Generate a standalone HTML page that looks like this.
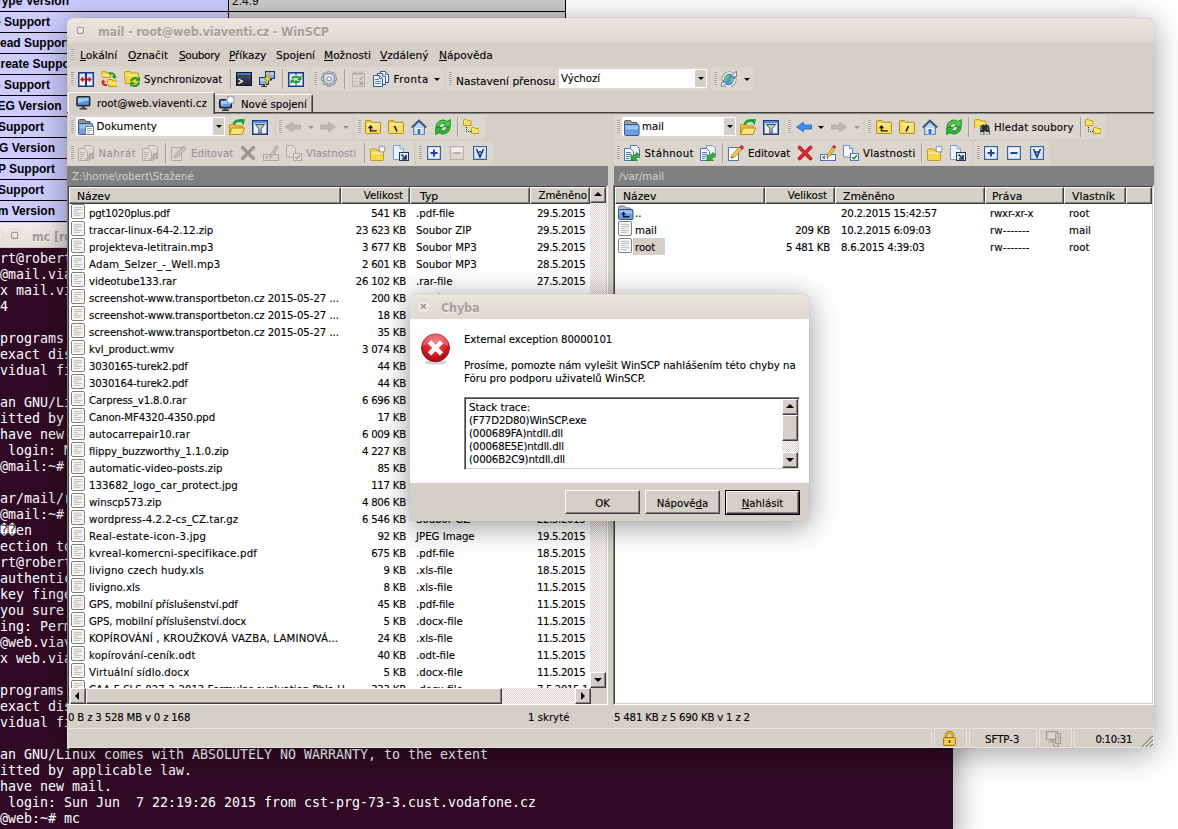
<!DOCTYPE html>
<html lang="cs"><head><meta charset="utf-8"><title>WinSCP</title>
<style>
html,body{margin:0;padding:0}
body{width:1178px;height:829px;overflow:hidden;position:relative;background:#fff;font-family:"DejaVu Sans Condensed","DejaVu Sans",sans-serif;font-stretch:condensed;font-size:11px;color:#000}
*{box-sizing:border-box}
.abs{position:absolute}
/* phpinfo table */
#php{position:absolute;left:0;top:0;width:566px;height:226px;background:#ccc;overflow:hidden;border-right:1px solid #000}
#php .row{position:absolute;left:0;width:566px;height:21px;border-bottom:1px solid #000}
#php .k{position:absolute;left:0;top:0;width:229px;height:20px;background:#ccf;border-right:1px solid #000;overflow:hidden}
#php .k span{position:absolute;top:3px;white-space:nowrap;font:bold 12px "Liberation Sans",sans-serif;font-stretch:normal;line-height:14px}
#php .v{position:absolute;left:232px;top:3px;font:12px "Liberation Sans",sans-serif;font-stretch:normal;line-height:14px}
/* terminal */
#term{position:absolute;left:0;top:223px;width:953px;height:620px;background:#300a24;box-shadow:0 4px 30px rgba(0,0,0,.45);clip-path:inset(0 -50px 0 0)}
#term .tb{position:absolute;left:0;top:0;width:953px;height:25px;background:linear-gradient(#f1eee9,#e3dfd8);border-bottom:1px solid #cfcac2}
#term .tb .ttl{position:absolute;left:32px;top:5.500px;font:bold 12.5px/15px "DejaVu Sans Condensed","DejaVu Sans",sans-serif;font-stretch:condensed;color:#a5a19a;white-space:nowrap;letter-spacing:-.14px;text-shadow:0 1px 0 rgba(255,255,255,.5)}
#term pre{position:absolute;left:0;top:27px;margin:0;font:14px/16px "DejaVu Sans Mono","Liberation Mono",monospace;font-stretch:normal;color:#fff;transform:scaleX(0.9493);transform-origin:0 0;white-space:pre}
/* main window */
#win{position:absolute;left:67px;top:18px;width:1087px;height:730px;background:#d4d0c8;border-radius:6px 6px 0 0;box-shadow:0 5px 32px rgba(0,0,0,.38),0 0 1px rgba(0,0,0,.25)}
#win .title{position:absolute;left:0;top:0;width:100%;height:25px;border-radius:6px 6px 0 0;background:linear-gradient(#eae6df,#dfd8d0);border-top:1px solid #e6dfd6}
.wt{position:absolute;white-space:nowrap;font:bold 12.5px/15px "DejaVu Sans Condensed","DejaVu Sans",sans-serif;font-stretch:condensed;color:#a5a19a;letter-spacing:-.18px;text-shadow:0 1px 0 rgba(255,255,255,.5)}
.t{position:absolute;white-space:nowrap;font:10.2px/12px "DejaVu Sans",sans-serif;font-stretch:normal;color:#000}
.g{color:#96939a}
u{text-decoration:underline;text-underline-offset:1px}
.grp{position:absolute;background:#dbd7cf;border-radius:3px}
.grip{position:absolute;width:3px;background:repeating-linear-gradient(#a6a299 0 1px,#e6e3dd 1px 2px)}
.vsep{position:absolute;width:2px;border-left:1px solid #a19e97;border-right:1px solid #e4e1db}
.combo{position:absolute;background:#fff}
.cbtn{position:absolute;background:#d4d0c8}
.cbtn:after{content:"";position:absolute;left:3px;top:7px;border:3px solid transparent;border-top:3px solid #000;border-bottom:0}
.dd:after{content:"";position:absolute;left:0;top:0;border:3px solid transparent;border-top:3px solid #000;border-bottom:0}
.dd{position:absolute;width:6px;height:3px}
.dd.g:after{border-top-color:#9a968f}
.ico{position:absolute;width:16px;height:16px}
.pathbar{position:absolute;height:19px;background:#808080}
.pathbar span{position:absolute;left:5px;top:5px;color:#d4d0c8;white-space:nowrap;font:10.2px/12px "DejaVu Sans",sans-serif;font-stretch:normal}
.hdr{position:absolute;height:18px;background:#d4d0c8}
.hc{position:absolute;top:0;height:17px;border:1px solid #fff;border-right-color:#404040;border-bottom-color:#404040;box-shadow:inset -1px -1px 0 #808080;background:#d4d0c8;font:10.8px/14px "DejaVu Sans",sans-serif;font-stretch:normal;padding:2px 5px 0 6px;white-space:nowrap;overflow:hidden}
.hc.r{text-align:right}
.panel{position:absolute;background:#fff;overflow:hidden}
.r{position:absolute;left:0;height:17px;width:100%;font:10.2px/12px "DejaVu Sans",sans-serif;font-stretch:normal;white-space:nowrap}
.r .fi{position:absolute;left:1px;top:0}
.r span{position:absolute;top:4px}
.r .n{left:19px;letter-spacing:-.04px}
.r .s{right:0;text-align:right}
.sb{position:absolute;background-color:#eae8e3;background-image:conic-gradient(#fff 25%,#d4d0c8 0 50%,#fff 0 75%,#d4d0c8 0);background-size:2px 2px}
.btn3{position:absolute;background:#d4d0c8;border:1px solid #fff;border-right-color:#404040;border-bottom-color:#404040;box-shadow:inset -1px -1px 0 #808080,inset 1px 1px 0 #d4d0c8}
.arr{position:absolute;width:0;height:0;border:4px solid transparent}
.sunk{position:absolute;border:1px solid #808080;border-right-color:#fff;border-bottom-color:#fff}
#lp .r .s{left:271px;width:65px}
#lp .r .t2{left:346px}
#lp .r .d{left:467px;letter-spacing:-.4px}
.r .s{letter-spacing:-.25px}
.r .dt{letter-spacing:-.27px}
/* dialog */
#dlg{position:absolute;left:410px;top:294px;width:399px;height:227px;background:#d4d0c8;border-radius:6px 6px 0 0;box-shadow:0 5px 30px rgba(0,0,0,.42),0 0 1px rgba(0,0,0,.3)}
#dlg .title{position:absolute;left:0;top:0;width:100%;height:25px;border-radius:6px 6px 0 0;background:linear-gradient(#eae6df,#dfd8d0);border-top:1px solid #e6dfd6}
#dlg .body{position:absolute;left:0;top:25px;width:100%;height:164px;background:#fff}
.pb{position:absolute;background:#d4d0c8;border:1px solid #fff;border-right-color:#404040;border-bottom-color:#404040;box-shadow:inset -1px -1px 0 #808080;text-align:center;font:10.2px/12px "DejaVu Sans",sans-serif;font-stretch:normal;padding-top:7px}
.sc{position:absolute;border:1px solid #e7e4de}
.t,.r,.hc,.pb{-webkit-text-stroke:.12px}
#rp .fi{left:3px}
#rp .r .n{left:20px}

</style></head><body>
<div id="php">
<div class="row" style="top:-9px"><div class="k"><span style="right:159px">FreeType Version</span></div><div class="v">2.4.9</div></div>
<div class="row" style="top:12px"><div class="k"><span style="right:178px">FreeType Support</span></div></div>
<div class="row" style="top:33px"><div class="k"><span style="right:158px">GIF Read Support</span></div></div>
<div class="row" style="top:54px"><div class="k"><span style="right:149.5px">GIF Create Support</span></div></div>
<div class="row" style="top:75px"><div class="k"><span style="right:178px">JPEG Support</span></div></div>
<div class="row" style="top:96px"><div class="k"><span style="right:166.4px">libJPEG Version</span></div></div>
<div class="row" style="top:117px"><div class="k"><span style="right:184px">PNG Support</span></div></div>
<div class="row" style="top:138px"><div class="k"><span style="right:173px">libPNG Version</span></div></div>
<div class="row" style="top:159px"><div class="k"><span style="right:173px">WBMP Support</span></div></div>
<div class="row" style="top:180px"><div class="k"><span style="right:184px">XPM Support</span></div></div>
<div class="row" style="top:201px"><div class="k"><span style="right:173px">libXpm Version</span></div></div>
<div class="row" style="top:222px"><div class="k"></div></div>
</div>

<div id="term">
<div class="tb"><svg class="abs" style="left:-12px;top:4px" width="36" height="17" viewBox="0 0 36 17"><circle cx="8.400" cy="8.400" r="6.800" fill="#ece8e2" stroke="#dcd7cf"/><path d="M5.500 8.400h5.800" stroke="#a09c95" stroke-width="1.300"/><circle cx="26.600" cy="8.400" r="6.800" fill="#ece8e2" stroke="#dcd7cf"/><rect x="23.500" y="5.300" width="6.200" height="6.200" rx="1.200" fill="none" stroke="#a09c95" stroke-width="1.300"/></svg><span class="ttl">mc [root@web.viaventi.cz]:~</span></div>
<pre>rt@robert-desktop:~$ ssh root@mail.viaventi.cz
@mail.viaventi.cz's password:
x mail.viaventi.cz 3.2.0-4-amd64 #1 SMP Debian 3.2.65-1+deb7u2 x86_64
4

programs included with the Debian GNU/Linux system are free software;
exact distribution terms for each program are described in the
vidual files in /usr/share/doc/*/copyright.

an GNU/Linux comes with ABSOLUTELY NO WARRANTY, to the extent
itted by applicable law.
have new mail.
 login: Mon Jun  8 04:12:51 2015 from cst-prg-73-3.cust.vodafone.cz
@mail:~# ls -la /var/mail

ar/mail/root
@mail:~# exit
��en
ection to mail.viaventi.cz closed.
rt@robert-desktop:~$ ssh root@web.viaventi.cz
authenticity of host 'web.viaventi.cz' can't be established.
key fingerprint is 5c:1f:2a:9b:77:e0:43:d8:11:6a:f2:0c:8e:b5:39:74.
you sure you want to continue connecting (yes/no)? yes
ing: Permanently added 'web.viaventi.cz' to the list of known hosts.
@web.viaventi.cz's password:
x web.viaventi.cz 3.2.0-4-amd64 #1 SMP Debian 3.2.65-1+deb7u2 x86_64

programs included with the Debian GNU/Linux system are free software;
exact distribution terms for each program are described in the
vidual files in /usr/share/doc/*/copyright.

an GNU/Linux comes with ABSOLUTELY NO WARRANTY, to the extent
itted by applicable law.
have new mail.
 login: Sun Jun  7 22:19:26 2015 from cst-prg-73-3.cust.vodafone.cz
@web:~# mc</pre>
</div>

<div id="win"><div class="title"></div></div>
<div id="w">
<!-- title -->
<svg class="abs" style="left:72px;top:22px" width="17" height="17" viewBox="0 0 17 17"><circle cx="8.400" cy="8.400" r="6.800" fill="#ece8e2" stroke="#dcd7cf"/><rect x="5.300" y="5.300" width="6.200" height="6.200" rx="1.200" fill="none" stroke="#a09c95" stroke-width="1.300"/></svg>
<span class="wt" style="left:98px;top:23.500px">mail - root@web.viaventi.cz - WinSCP</span>
<!-- menu -->
<div class="grip" style="left:71px;top:49px;height:11px"></div>
<span class="t" style="left:80px;top:49px;font-size:10.6px"><u>L</u>okální</span>
<span class="t" style="left:128px;top:49px;font-size:10.6px"><u>O</u>značit</span>
<span class="t" style="left:179px;top:49px;font-size:10.6px;letter-spacing:-.4px"><u>S</u>oubory</span>
<span class="t" style="left:229px;top:49px;font-size:10.6px;letter-spacing:-.1px"><u>P</u>říkazy</span>
<span class="t" style="left:276px;top:49px;font-size:10.6px">Spojení</span>
<span class="t" style="left:324px;top:49px;font-size:10.6px"><u>M</u>ožnosti</span>
<span class="t" style="left:380px;top:49px;font-size:10.6px"><u>V</u>zdálený</span>
<span class="t" style="left:439px;top:49px;font-size:10.6px"><u>N</u>ápověda</span>
<!-- toolbar 1 -->
<div class="grp" style="left:68px;top:67px;width:241px;height:24px"></div>
<div class="grip" style="left:71px;top:72px;height:13px"></div>
<svg class="ico" style="left:78px;top:71px" width="16" height="16" viewBox="0 0 16 16"><rect x="1" y="2" width="14" height="13" fill="#fff"/><rect x="1" y="2" width="14" height="5" fill="#d6e6fa"/><rect x="0.750" y="1.750" width="14.500" height="13.500" fill="none" stroke="#1b3a86" stroke-width="1.500"/><rect x="7" y="1" width="2" height="15" fill="#1b3a86"/><path d="M2 8.500l3.200-3v2h5.600v-2l3.200 3-3.200 3v-2H5.200v2z" fill="#c4141c"/></svg>
<svg class="ico" style="left:101px;top:71px" width="16" height="16" viewBox="0 0 16 16"><path d="M0.5 1.5q0-1 1-1h3.2l1 1.500h2.8q1 0 1 1v3.5h-8z" fill="#f7d64a" stroke="#c39a12"/><rect x="1" y="3.5" width="7" height="1.200" fill="#fdf1b0"/><path d="M6.5 9.5q0-1 1-1h3.6l1 1.500h3.4q1 0 1 1v4.5h-9z" fill="#f7d64a" stroke="#c39a12"/><rect x="7" y="11.5" width="8" height="1.200" fill="#fdf1b0"/><path d="M8 2.500c3.500-1 5.500.5 5.500 3" fill="none" stroke="#1e9e28" stroke-width="2"/><path d="M10.800 5h5.200l-2.600 3.200z" fill="#1e9e28"/><path d="M6 14c-3 .5-4.500-1-4.500-3" fill="none" stroke="#cf1f24" stroke-width="2"/><path d="M0 11.500h4.800L2 8.500z" fill="#cf1f24"/></svg>
<svg class="ico" style="left:124px;top:71px" width="16" height="16" viewBox="0 0 16 16"><path d="M0.5 1.5q0-1 1-1h5.0l1 1.500h6.0q1 0 1 1v9.5h-13z" fill="#f7d64a" stroke="#c39a12"/><rect x="1" y="3.5" width="12" height="1.200" fill="#fdf1b0"/><path d="M7.200 10.500a4 3.600 0 0 1 7-2" fill="none" stroke="#1e9e28" stroke-width="2.200"/><path d="M16 5.500v4.800h-4.800z" fill="#1e9e28"/><path d="M15 11.500a4 3.600 0 0 1-7 2.200" fill="none" stroke="#1e9e28" stroke-width="2.200"/><path d="M6.200 16v-4.800H11z" fill="#1e9e28"/></svg>
<span class="t" style="left:144px;top:74px">Synchronizovat</span>
<div class="vsep" style="left:230px;top:69px;height:20px"></div>
<svg class="ico" style="left:236px;top:72px" width="16" height="16" viewBox="0 0 16 16"><rect x="0.500" y="0.500" width="15" height="13" fill="#28313d" stroke="#10151c"/><rect x="1" y="1" width="14" height="2.200" fill="#3f7ad6"/><rect x="1" y="3.200" width="14" height="4" fill="#3a4453"/><path d="M2.500 7l4 2.300-4 2.300" stroke="#fff" fill="none" stroke-width="1.300"/></svg>
<svg class="ico" style="left:259px;top:71px" width="16" height="16" viewBox="0 0 16 16"><rect x="6.500" y="0.500" width="9" height="7" fill="#7db1ee" stroke="#27364f"/><rect x="7.500" y="1.500" width="7" height="2.500" fill="#b7d6f8"/><rect x="10" y="8" width="3" height="1.500" fill="#27364f"/><rect x="0.500" y="6.500" width="9" height="7" fill="#7db1ee" stroke="#27364f"/><rect x="1.500" y="7.500" width="7" height="2.500" fill="#b7d6f8"/><rect x="4" y="14" width="2" height="1" fill="#27364f"/><rect x="2" y="15" width="6" height="1" fill="#27364f"/><path d="M11 1.500L5 8.800h2.800L5.500 14l6.500-7.200H9.200z" fill="#ffd93a" stroke="#b98a10" stroke-width=".7"/></svg>
<div class="vsep" style="left:282px;top:69px;height:20px"></div>
<svg class="ico" style="left:288px;top:72px" width="16" height="16" viewBox="0 0 16 16"><rect x="1" y="1" width="14" height="13" fill="#fff"/><rect x="1" y="1" width="14" height="5" fill="#d6e6fa"/><rect x="0.750" y="0.750" width="14.500" height="13.500" fill="none" stroke="#1b3a86" stroke-width="1.500"/><path d="M8 1v14" stroke="#1b3a86" stroke-width="1.200" stroke-dasharray="2 1.500"/><path d="M4 6.500a4.500 3 0 0 1 7-1" fill="none" stroke="#1e9e28" stroke-width="2"/><path d="M13.500 3v5H8.800z" fill="#1e9e28"/><path d="M12 8.500a4.500 3 0 0 1-7 1.200" fill="none" stroke="#1e9e28" stroke-width="2"/><path d="M2.500 12.500v-5h4.700z" fill="#1e9e28"/></svg>
<div class="grp" style="left:311px;top:67px;width:133px;height:24px"></div>
<div class="grip" style="left:314px;top:72px;height:13px"></div>
<svg class="ico" style="left:321px;top:71px" width="16" height="16" viewBox="0 0 16 16"><g transform="translate(8 7.800)" fill="#c3cad6" stroke="#76829a" stroke-width=".9"><rect x="-1.800" y="-7.600" width="3.600" height="4.500" rx=".6" transform="rotate(0)"/><rect x="-1.800" y="-7.600" width="3.600" height="4.500" rx=".6" transform="rotate(45)"/><rect x="-1.800" y="-7.600" width="3.600" height="4.500" rx=".6" transform="rotate(90)"/><rect x="-1.800" y="-7.600" width="3.600" height="4.500" rx=".6" transform="rotate(135)"/><rect x="-1.800" y="-7.600" width="3.600" height="4.500" rx=".6" transform="rotate(180)"/><rect x="-1.800" y="-7.600" width="3.600" height="4.500" rx=".6" transform="rotate(225)"/><rect x="-1.800" y="-7.600" width="3.600" height="4.500" rx=".6" transform="rotate(270)"/><rect x="-1.800" y="-7.600" width="3.600" height="4.500" rx=".6" transform="rotate(315)"/><circle r="5.400"/></g><circle cx="8" cy="7.800" r="4.900" fill="#cdd3dd"/><path d="M3.400 6.500a4.900 4.900 0 0 1 9.200 0z" fill="#e3e7ee"/><circle cx="8" cy="7.800" r="2.100" fill="#fbfbfb" stroke="#76829a" stroke-width=".9"/></svg>
<div class="vsep" style="left:344px;top:69px;height:20px"></div>
<svg class="ico" style="left:352px;top:71px" width="16" height="16" viewBox="0 0 16 16"><rect x="0.500" y="2.500" width="12" height="13" fill="#dad7d0" stroke="#b3b0a8"/><path d="M2 .5v3.500M4 .5v3.500M6 .5v3.500M8 .5v3.500M10 .5v3.500" stroke="#a9a69f"/><path d="M2 7.500h4M2 10.500h4M2 13.500h4" stroke="#c3c0b9"/><path d="M7.500 7l1.200 1.200L11 5.800M7.500 10.500l3.500 3.500M11 10.500L7.500 14" stroke="#a3a099" fill="none" stroke-width="1.300"/></svg>
<svg class="ico" style="left:373px;top:71px" width="16" height="16" viewBox="0 0 16 16"><path d="M7.5 0.5h5l3 3v8h-8z" fill="#f4f8fe" stroke="#33579b"/><path d="M12.5 0.5v3h3" fill="#c9dcf5" stroke="#33579b" stroke-width=".8"/><path d="M4.5 2.5h5l3 3v8h-8z" fill="#f4f8fe" stroke="#33579b"/><path d="M9.5 2.5v3h3" fill="#c9dcf5" stroke="#33579b" stroke-width=".8"/><path d="M0.500 4.500h6l3 3v8h-9z" fill="#f4f8fe" stroke="#33579b"/><path d="M6.500 4.500v3h3" fill="#c9dcf5" stroke="#33579b" stroke-width=".8"/><path d="M2 8.500h4M2 10.500h6M2 12.500h6" stroke="#4d7fca" stroke-width="1"/></svg>
<span class="t" style="left:393.5px;top:74px;letter-spacing:0.55px">Fronta</span>
<div class="dd" style="left:434px;top:78px"></div>
<div class="grp" style="left:446px;top:67px;width:262px;height:24px"></div>
<div class="grip" style="left:449px;top:72px;height:13px"></div>
<span class="t" style="left:456px;top:75px;font-size:10.6px">Nastavení přenosu</span>
<div class="combo" style="left:559px;top:69px;width:148px;height:19px"></div>
<span class="t" style="left:561px;top:73px">Výchozí</span>
<div class="cbtn" style="left:695px;top:70px;width:11px;height:17px"></div>
<div class="grp" style="left:711px;top:67px;width:43px;height:24px"></div>
<div class="grip" style="left:714px;top:72px;height:13px"></div>
<svg class="ico" style="left:721px;top:71px" width="16" height="16" viewBox="0 0 16 16"><circle cx="8" cy="8.500" r="6" fill="#4b93e4" stroke="#2a5ca8"/><path d="M3 6c1.500-2.500 4-2.500 5-1.500s-1 2-2 3 .5 2.500-1 3.500S2.500 8.500 3 6zM10 7c1-.8 3-.5 3.500.5s-.5 3.500-2 4-2.500-3-1.500-4.500z" fill="#6fcf57"/><path d="M2.200 9a6.200 6.200 0 0 1 9.500-6" fill="none" stroke="#5a6b86" stroke-width="3"/><path d="M2.200 9a6.200 6.200 0 0 1 9.500-6" fill="none" stroke="#e9edf4" stroke-width="1.800"/><path d="M9.800 5.800h5.700V0z" fill="#e9edf4" stroke="#5a6b86" stroke-width=".8"/><path d="M13.800 8a6.200 6.200 0 0 1-9.500 6" fill="none" stroke="#5a6b86" stroke-width="3"/><path d="M13.800 8a6.200 6.200 0 0 1-9.500 6" fill="none" stroke="#e9edf4" stroke-width="1.800"/><path d="M6.200 11.200H.5V16.500z" fill="#e9edf4" stroke="#5a6b86" stroke-width=".8"/></svg>
<div class="dd" style="left:744px;top:78px"></div>
<!-- tabs -->
<div class="abs" style="left:67px;top:112px;width:1087px;height:2px;background:#404040;border-bottom:1px solid #8d8a85"></div>
<div class="abs" style="left:68px;top:92px;width:147px;height:22px;background:#d4d0c8;border:1px solid #fff;border-right:1px solid #404040;border-bottom:0;border-radius:2px 2px 0 0;box-shadow:inset -1px 0 0 #808080"></div>
<svg class="ico" style="left:76px;top:95px" width="16" height="16" viewBox="0 0 16 16"><g transform="translate(0.300 1.100) scale(0.880 0.860)"><rect x="0.500" y="0.500" width="15" height="11" rx="1" fill="#2c3038" stroke="#16181d"/><rect x="1.800" y="1.800" width="12.400" height="8.400" fill="#4f93e8"/><path d="M1.800 1.800h12.400v3.500c-4 .2-8 1.500-12.400 3z" fill="#9cc6f6"/><rect x="6" y="12" width="4" height="2" fill="#3a3d44"/><rect x="3.500" y="14" width="9" height="1.500" rx=".5" fill="#22242a"/></g></svg>
<span class="t" style="left:97px;top:98px">root@web.viaventi.cz</span>
<div class="abs" style="left:215px;top:94px;width:98px;height:18px;background:#d4d0c8;border-top:1px solid #fff;border-right:1px solid #404040;border-radius:0 2px 0 0;box-shadow:inset -1px 0 0 #808080"></div>
<svg class="ico" style="left:219px;top:95px" width="16" height="16" viewBox="0 0 16 16"><rect x="0.500" y="4.500" width="12" height="8.500" rx="1" fill="#2c3038" stroke="#16181d"/><rect x="1.800" y="5.800" width="9.400" height="6" fill="#5b9bea"/><path d="M1.800 5.800h9.400v2.500c-3 .2-6 1-9.400 2z" fill="#a5cbf6"/><rect x="4.500" y="13.500" width="4" height="1.200" fill="#3a3d44"/><rect x="3" y="14.700" width="7" height="1.300" fill="#22242a"/><path d="M11.500 0l1.100 2.300 2.400-.9-.9 2.400 2.300 1.100-2.300 1.100.9 2.400-2.400-.9-1.100 2.300-1.100-2.300-2.400.9.900-2.400L6.600 4.900l2.300-1.100-.9-2.400 2.400.9z" fill="#f3f6fb" stroke="#7b90b5" stroke-width=".7"/><circle cx="11.500" cy="4.900" r="1.800" fill="#fff"/></svg>
<span class="t" style="left:241px;top:99px">Nové spojení</span>
<!-- LEFT toolbar row 2 -->
<div class="grp" style="left:68px;top:115px;width:206px;height:24px"></div>
<div class="grip" style="left:71px;top:120px;height:13px"></div>
<div class="combo" style="left:76px;top:117px;width:149px;height:19px"></div>
<svg class="ico" style="left:78px;top:119px" width="16" height="16" viewBox="0 0 16 16"><path d="M0.500 15V1.500q0-1 1-1h5l1.500 2h4v3" fill="#8f9499" stroke="#4d5258"/><path d="M1.500 15.500q-1 0-1-1V5.500q0-1 1-1h12q1 0 1 1v9q0 1-1 1z" fill="#6f9fde" stroke="#2f5a9e"/><path d="M1.500 5.500h12v4h-12z" fill="#9ec1ee"/><rect x="7.500" y="7.500" width="8" height="8" fill="#fff" stroke="#7a7a7a"/><path d="M9 9.500h5M9 11.500h5M9 13.500h3" stroke="#a8a8a8"/></svg>
<span class="t" style="left:96.5px;top:121px;letter-spacing:0.2px">Dokumenty</span>
<div class="cbtn" style="left:213px;top:118px;width:11px;height:17px"></div>
<svg class="ico" style="left:229px;top:119px" width="16" height="16" viewBox="0 0 16 16"><path d="M0.500 15.500V6.500q0-1 1-1h4l1 1.500h7v3" fill="#f2c83a" stroke="#b98d0f"/><path d="M0.500 15.500l2.500-6.500h12.500l-2.500 6.500z" fill="#fbe27a" stroke="#b98d0f"/><path d="M5 5.500c.5-3.500 4-4.500 7-3.500" fill="none" stroke="#239a2c" stroke-width="2.600"/><path d="M10 0l6 .3-1.500 6z" fill="#239a2c"/></svg>
<svg class="ico" style="left:252px;top:119px" width="16" height="16" viewBox="0 0 16 16"><rect x="0.750" y="1.750" width="14.500" height="13.500" fill="#e9f1fc" stroke="#1b3a86" stroke-width="1.500"/><rect x="1.500" y="2.500" width="13" height="1.800" fill="#4b86dd"/><path d="M3.500 5.500h9L9.200 9.500V14H6.800V9.500z" fill="#c5c9cf" stroke="#3a3d44" stroke-width=".9"/></svg>
<div class="grp" style="left:276px;top:115px;width:77px;height:24px"></div>
<div class="grip" style="left:279px;top:120px;height:13px"></div>
<svg class="ico" style="left:285px;top:119px" width="16" height="16" viewBox="0 0 16 16"><path d="M0.500 8L7.500 3.200v2.800h8v4h-8v2.800z" fill="#bcb9b2" stroke="#a9a69f" stroke-width=".8"/></svg>
<div class="dd g" style="left:308px;top:126px"></div>
<svg class="ico" style="left:320px;top:119px" width="16" height="16" viewBox="0 0 16 16"><path d="M0.500 8L7.500 3.200v2.800h8v4h-8v2.800z" fill="#bcb9b2" stroke="#a9a69f" stroke-width=".8" transform="translate(16 0) scale(-1 1)"/></svg>
<div class="dd g" style="left:343px;top:126px"></div>
<div class="grp" style="left:355px;top:115px;width:130px;height:24px"></div>
<div class="grip" style="left:358px;top:120px;height:13px"></div>
<svg class="ico" style="left:365px;top:119px" width="16" height="16" viewBox="0 0 16 16"><path d="M1.500 14.500q-1 0-1-1V2.500q0-1 1-1h4l1.500 1.800h7.500q1 0 1 1v9.200q0 1-1 1z" fill="#f5cf3e" stroke="#b98d0f"/><path d="M1.500 5.200h13v8.300h-13z" fill="#fae06c"/><rect x="1.500" y="4.300" width="13" height="1.200" fill="#fff6c8"/><path d="M5.500 6L2.800 9.300h2v3.200h7V11.200H6.200V9.300h2z" fill="#16181d"/></svg>
<svg class="ico" style="left:388px;top:119px" width="16" height="16" viewBox="0 0 16 16"><path d="M1.500 14.500q-1 0-1-1V2.500q0-1 1-1h4l1.500 1.800h7.500q1 0 1 1v9.200q0 1-1 1z" fill="#f5cf3e" stroke="#b98d0f"/><path d="M1.500 5.200h13v8.300h-13z" fill="#fae06c"/><rect x="1.500" y="4.300" width="13" height="1.200" fill="#fff6c8"/><path d="M6.500 7l2.500 5.500" stroke="#16181d" stroke-width="1.600"/></svg>
<svg class="ico" style="left:411px;top:119px" width="16" height="16" viewBox="0 0 16 16"><path d="M2.500 8v7.500h11V8L8 2.500z" fill="#b9d3f2" stroke="#5f7fb0"/><path d="M3.500 9h9v3h-9z" fill="#cfe1f7"/><rect x="5.500" y="9" width="5" height="6.500" fill="#fff"/><rect x="6.500" y="10" width="3" height="5.500" fill="#2f6fd6"/><path d="M0.800 8.500L8 1.500l7.200 7" fill="none" stroke="#3b5578" stroke-width="1.900" stroke-linejoin="miter"/></svg>
<svg class="ico" style="left:435px;top:119px" width="16" height="16" viewBox="0 0 16 16"><path d="M1.100 7.600C1.100 3.500 5 .800 8.500 1c1.300.1 2.400.6 3.300 1.400L15.300.600v7H8.300l2.200-2.300c-.9-.7-2-1-3-1-1.700.2-3 1.500-3.100 3.300z" fill="#4cc653" stroke="#168a1e" stroke-width=".9" stroke-linejoin="round"/><g transform="rotate(180 8 8.050)"><path d="M1.100 7.600C1.100 3.500 5 .800 8.500 1c1.300.1 2.400.6 3.300 1.400L15.300.600v7H8.300l2.200-2.300c-.9-.7-2-1-3-1-1.700.2-3 1.500-3.100 3.300z" fill="#35b03d" stroke="#168a1e" stroke-width=".9" stroke-linejoin="round"/></g></svg>
<div class="vsep" style="left:457px;top:117px;height:20px"></div>
<svg class="ico" style="left:463px;top:119px" width="16" height="16" viewBox="0 0 16 16"><path d="M0.5 6.5V1.5q0-1 1-1h2l1 1h2.500q1 0 1 1v4z" fill="#f9e36a" stroke="#c39a12"/><path d="M8.5 14.5V9.5q0-1 1-1h2l1 1h2.500q1 0 1 1v4z" fill="#f9e36a" stroke="#c39a12"/><path d="M3.500 8v4.500h5" fill="none" stroke="#222" stroke-width="1" stroke-dasharray="1 1"/></svg>
<!-- LEFT toolbar row 3 -->
<div class="grp" style="left:68px;top:141px;width:346px;height:24px"></div>
<div class="grip" style="left:71px;top:146px;height:13px"></div>
<svg class="ico" style="left:78px;top:145px" width="16" height="16" viewBox="0 0 16 16"><path d="M6.5 0.5h6l3 3v9h-9z" fill="#dedbd5" stroke="#aeaba4"/><path d="M0.5 3.5h6l3 3v9h-9z" fill="#dedbd5" stroke="#aeaba4"/><path d="M2 7.500h5M2 9.500h5M2 11.500h4M2 13.500h3" stroke="#bab7b0"/><path d="M15.500 7.500v6h-2.500l-3.500 3-2-2 3.500-3V9z" fill="#b9b6af" stroke="#a19e97" stroke-width=".6"/></svg>
<span class="t g" style="left:98.5px;top:148px;letter-spacing:0.5px">Nahrát</span>
<svg class="ico" style="left:142px;top:145px" width="16" height="16" viewBox="0 0 16 16"><path d="M6.5 0.5h6l3 3v9h-9z" fill="#dedbd5" stroke="#aeaba4"/><path d="M0.5 3.5h6l3 3v9h-9z" fill="#dedbd5" stroke="#aeaba4"/><path d="M2 7.500h5M2 9.500h5M2 11.500h4M2 13.500h3" stroke="#bab7b0"/><path d="M15.500 7.500v6h-2.500l-3.500 3-2-2 3.500-3V9z" fill="#b9b6af" stroke="#a19e97" stroke-width=".6"/></svg>
<div class="vsep" style="left:165px;top:143px;height:20px"></div>
<svg class="ico" style="left:171px;top:145px" width="16" height="16" viewBox="0 0 16 16"><path d="M0.500 2.500h10v13h-10z" fill="#dad7d0" stroke="#aba8a1"/><path d="M3 13l1-3.500L12.500 1l2.500 2.500L6.500 12z" fill="#c4c1ba" stroke="#9c9992" stroke-width=".8"/></svg>
<span class="t g" style="left:191px;top:148px">Editovat</span>
<svg class="ico" style="left:240px;top:145px" width="16" height="16" viewBox="0 0 16 16"><path d="M2.500 2.500l11 11M13.500 2.500l-11 11" stroke="#9b9893" stroke-width="3.200" stroke-linecap="round"/></svg>
<svg class="ico" style="left:263px;top:145px" width="16" height="16" viewBox="0 0 16 16"><rect x="0.500" y="9.500" width="15" height="6" fill="#dad7d0" stroke="#aba8a1"/><path d="M2.500 11l2.500 3M5 11l-2.500 3M7.500 11v3" stroke="#a29f98" stroke-width=".9"/><path d="M7 12l1-3L13 .8l2 1.500L10 10.500z" fill="#c9c6bf" stroke="#9c9992" stroke-width=".8"/></svg>
<svg class="ico" style="left:286px;top:145px" width="16" height="16" viewBox="0 0 16 16"><path d="M0.500 .5h6l3 3v8.500h-9z" fill="#dedbd5" stroke="#aeaba4"/><rect x="7.500" y="8.500" width="8" height="7" fill="#e4e1db" stroke="#aeaba4"/><path d="M9.200 12l1.800 1.800 3-3.800" fill="none" stroke="#a29f98" stroke-width="1.400"/></svg>
<span class="t g" style="left:306px;top:148px">Vlastnosti</span>
<div class="vsep" style="left:364px;top:143px;height:20px"></div>
<svg class="ico" style="left:370px;top:145px" width="16" height="16" viewBox="0 0 16 16"><path d="M1.500 15.500q-1 0-1-1V5q0-1 1-1h4.500l1.500 1.800h5q1 0 1 1v7.700q0 1-1 1z" fill="#f7d64a" stroke="#c39a12"/><rect x="1.500" y="7.500" width="11" height="1.300" fill="#fdf1b0"/><path d="M12 0l.9 2 2-.8-.8 2 2 .9-2 .9.800 2-2-.8-.9 2-.9-2-2 .8.800-2-2-.9 2-.9-.8-2 2 .8z" fill="#f3f6fb" stroke="#7b90b5" stroke-width=".7"/><circle cx="12" cy="4.100" r="1.700" fill="#fff"/></svg>
<svg class="ico" style="left:393px;top:145px" width="16" height="16" viewBox="0 0 16 16"><path d="M0.500 .5h6.500l3.500 3.500v10.500h-10z" fill="#eef4fc" stroke="#7f9cc9"/><path d="M7 .5v3.500h3.500" fill="#cfe0f5" stroke="#7f9cc9" stroke-width=".8"/><rect x="6.500" y="7.500" width="9" height="8" fill="#dfe9f7" stroke="#22355a"/><path d="M8.500 9.500l4 4M13 10v4H9" fill="none" stroke="#22355a" stroke-width="1.700"/></svg>
<div class="grp" style="left:416px;top:141px;width:77px;height:24px"></div>
<div class="grip" style="left:419px;top:146px;height:13px"></div>
<svg class="ico" style="left:427px;top:146px" width="16" height="16" viewBox="0 0 16 16"><rect x="0.600" y="0.600" width="12.800" height="12.800" fill="#e4edfb" stroke="#3f5fa3" stroke-width="1.200"/><rect x="1.500" y="1.500" width="11" height="4.500" fill="#fff" opacity=".55"/><path d="M3.500 7h7M7 3.500v7" stroke="#24448c" stroke-width="2"/></svg>
<svg class="ico" style="left:450px;top:146px" width="16" height="16" viewBox="0 0 16 16"><rect x="0.600" y="0.600" width="12.800" height="12.800" fill="#dcd9d3" stroke="#b8b5ae" stroke-width="1.200"/><rect x="1.500" y="1.500" width="11" height="4.500" fill="#fff" opacity=".55"/><path d="M3.500 7h7" stroke="#aaa7a0" stroke-width="1.800"/></svg>
<svg class="ico" style="left:473px;top:146px" width="16" height="16" viewBox="0 0 16 16"><rect x="0.600" y="0.600" width="12.800" height="12.800" fill="#d6e4f8" stroke="#3f5fa3" stroke-width="1.200"/><rect x="1.500" y="1.500" width="11" height="4.500" fill="#fff" opacity=".55"/><path d="M3.500 3l3.500 8 3.500-8M5 6h4" fill="none" stroke="#1b3a86" stroke-width="1.600"/></svg>
<!-- RIGHT toolbar row 2 -->
<div class="grp" style="left:614px;top:115px;width:169px;height:24px"></div>
<div class="grip" style="left:617px;top:120px;height:13px"></div>
<div class="combo" style="left:622px;top:117px;width:114px;height:19px"></div>
<svg class="ico" style="left:624px;top:119.5px" width="16" height="16" viewBox="0 0 16 16"><path d="M0.500 14V1.500q0-1 1-1h5l2 2h4.500v3" fill="#9aa0a6" stroke="#5a6068"/><path d="M1.500 15.500q-1 0-1-1V5.500q0-1 1-1h12.500q1 0 1 1v9q0 1-1 1z" fill="#6c9fe0" stroke="#2f5a9e"/><path d="M1.500 5.500h12.500v4h-12.500z" fill="#a3c6f1"/></svg>
<span class="t" style="left:642px;top:121px">mail</span>
<div class="cbtn" style="left:724px;top:118px;width:11px;height:17px"></div>
<svg class="ico" style="left:740px;top:119px" width="16" height="16" viewBox="0 0 16 16"><path d="M0.500 15.500V6.500q0-1 1-1h4l1 1.500h7v3" fill="#f2c83a" stroke="#b98d0f"/><path d="M0.500 15.500l2.500-6.500h12.500l-2.500 6.500z" fill="#fbe27a" stroke="#b98d0f"/><path d="M5 5.500c.5-3.500 4-4.500 7-3.500" fill="none" stroke="#239a2c" stroke-width="2.600"/><path d="M10 0l6 .3-1.500 6z" fill="#239a2c"/></svg>
<svg class="ico" style="left:763px;top:119px" width="16" height="16" viewBox="0 0 16 16"><rect x="0.750" y="1.750" width="14.500" height="13.500" fill="#e9f1fc" stroke="#1b3a86" stroke-width="1.500"/><rect x="1.500" y="2.500" width="13" height="1.800" fill="#4b86dd"/><path d="M3.500 5.500h9L9.200 9.500V14H6.800V9.500z" fill="#c5c9cf" stroke="#3a3d44" stroke-width=".9"/></svg>
<div class="grp" style="left:785px;top:115px;width:78px;height:24px"></div>
<div class="grip" style="left:788px;top:120px;height:13px"></div>
<svg class="ico" style="left:796px;top:119px" width="16" height="16" viewBox="0 0 16 16"><path d="M0.500 8L7.500 3.200v2.800h8v4h-8v2.800z" fill="#3f8ff0" stroke="#1f5fc0" stroke-width=".8"/></svg>
<div class="dd" style="left:818px;top:126px"></div>
<svg class="ico" style="left:831px;top:119px" width="16" height="16" viewBox="0 0 16 16"><path d="M0.500 8L7.500 3.200v2.800h8v4h-8v2.800z" fill="#bcb9b2" stroke="#a9a69f" stroke-width=".8" transform="translate(16 0) scale(-1 1)"/></svg>
<div class="dd g" style="left:854px;top:126px"></div>
<div class="grp" style="left:865px;top:115px;width:241px;height:24px"></div>
<div class="grip" style="left:868px;top:120px;height:13px"></div>
<svg class="ico" style="left:876px;top:119px" width="16" height="16" viewBox="0 0 16 16"><path d="M1.500 14.500q-1 0-1-1V2.500q0-1 1-1h4l1.500 1.800h7.500q1 0 1 1v9.200q0 1-1 1z" fill="#f5cf3e" stroke="#b98d0f"/><path d="M1.500 5.200h13v8.300h-13z" fill="#fae06c"/><rect x="1.500" y="4.300" width="13" height="1.200" fill="#fff6c8"/><path d="M5.500 6L2.800 9.300h2v3.200h7V11.200H6.200V9.300h2z" fill="#16181d"/></svg>
<svg class="ico" style="left:899px;top:119px" width="16" height="16" viewBox="0 0 16 16"><path d="M1.500 14.500q-1 0-1-1V2.500q0-1 1-1h4l1.500 1.800h7.500q1 0 1 1v9.200q0 1-1 1z" fill="#f5cf3e" stroke="#b98d0f"/><path d="M1.500 5.200h13v8.300h-13z" fill="#fae06c"/><rect x="1.500" y="4.300" width="13" height="1.200" fill="#fff6c8"/><path d="M9.500 7l-2.500 5.500" stroke="#16181d" stroke-width="1.600"/></svg>
<svg class="ico" style="left:922px;top:119px" width="16" height="16" viewBox="0 0 16 16"><path d="M2.500 8v7.500h11V8L8 2.500z" fill="#b9d3f2" stroke="#5f7fb0"/><path d="M3.500 9h9v3h-9z" fill="#cfe1f7"/><rect x="5.500" y="9" width="5" height="6.500" fill="#fff"/><rect x="6.500" y="10" width="3" height="5.500" fill="#2f6fd6"/><path d="M0.800 8.500L8 1.500l7.200 7" fill="none" stroke="#3b5578" stroke-width="1.900" stroke-linejoin="miter"/></svg>
<svg class="ico" style="left:946px;top:119px" width="16" height="16" viewBox="0 0 16 16"><path d="M1.100 7.600C1.100 3.500 5 .800 8.500 1c1.300.1 2.400.6 3.300 1.400L15.300.600v7H8.300l2.200-2.300c-.9-.7-2-1-3-1-1.700.2-3 1.500-3.100 3.300z" fill="#4cc653" stroke="#168a1e" stroke-width=".9" stroke-linejoin="round"/><g transform="rotate(180 8 8.050)"><path d="M1.100 7.600C1.100 3.500 5 .800 8.500 1c1.300.1 2.400.6 3.300 1.400L15.300.600v7H8.300l2.200-2.300c-.9-.7-2-1-3-1-1.700.2-3 1.500-3.100 3.300z" fill="#35b03d" stroke="#168a1e" stroke-width=".9" stroke-linejoin="round"/></g></svg>
<div class="vsep" style="left:968px;top:117px;height:20px"></div>
<svg class="ico" style="left:974px;top:119px" width="16" height="16" viewBox="0 0 16 16"><path d="M0.500 9.500V1.500q0-1 1-1h4l1.500 1.500h4q1 0 1 1v3" fill="#f7d64a" stroke="#c39a12"/><rect x="1.500" y="3.300" width="10" height="1.200" fill="#fdf1b0"/><path d="M6.500 6.500h2v-1h2v1h1v-1h2v1h1.500l.8 6v3h-4v-3.500h-1.500V15.500h-4v-3z" fill="#2a2d33"/><rect x="6.500" y="13" width="3" height="2.500" fill="#cfd3da"/><rect x="12" y="13" width="3" height="2.500" fill="#cfd3da"/><path d="M7.500 8v3M13.500 8v3" stroke="#8c919a" stroke-width=".8"/></svg>
<span class="t" style="left:994px;top:122px;letter-spacing:0.15px">Hledat soubory</span>
<div class="vsep" style="left:1080px;top:117px;height:20px"></div>
<svg class="ico" style="left:1085px;top:119px" width="16" height="16" viewBox="0 0 16 16"><path d="M0.5 6.5V1.5q0-1 1-1h2l1 1h2.500q1 0 1 1v4z" fill="#f9e36a" stroke="#c39a12"/><path d="M8.5 14.5V9.5q0-1 1-1h2l1 1h2.500q1 0 1 1v4z" fill="#f9e36a" stroke="#c39a12"/><path d="M3.500 8v4.500h5" fill="none" stroke="#222" stroke-width="1" stroke-dasharray="1 1"/></svg>
<!-- RIGHT toolbar row 3 -->
<div class="grp" style="left:614px;top:141px;width:358px;height:24px"></div>
<div class="grip" style="left:617px;top:146px;height:13px"></div>
<svg class="ico" style="left:624px;top:145px" width="16" height="16" viewBox="0 0 16 16"><path d="M6.5 0.5h6l3 3v9h-9z" fill="#f4f8fe" stroke="#4f74b3"/><path d="M0.5 3.5h6l3 3v9h-9z" fill="#f4f8fe" stroke="#4f74b3"/><path d="M2 7.500h5M2 9.500h5M2 11.500h4M2 13.500h3" stroke="#4d7fca"/><path d="M7 15.500v-6l2 1.800 4-3.800 2.500 2.500-4 3.700 2 1.800z" fill="#2fae3a" stroke="#167a20" stroke-width=".7"/></svg>
<span class="t" style="left:644.5px;top:148px;letter-spacing:0.4px">Stáhnout</span>
<svg class="ico" style="left:699.5px;top:145px" width="16" height="16" viewBox="0 0 16 16"><path d="M6.5 0.5h6l3 3v9h-9z" fill="#eef1f5" stroke="#8c97a8"/><path d="M0.5 3.5h6l3 3v9h-9z" fill="#f4f8fe" stroke="#4f74b3"/><path d="M2 7.500h5M2 9.500h5M2 11.500h4M2 13.500h3" stroke="#4d7fca"/><path d="M7 15.500v-6l2 1.800 4-3.800 2.500 2.500-4 3.700 2 1.800z" fill="#2fae3a" stroke="#167a20" stroke-width=".7"/></svg>
<div class="vsep" style="left:722px;top:143px;height:20px"></div>
<svg class="ico" style="left:728px;top:145px" width="16" height="16" viewBox="0 0 16 16"><path d="M0.500 2.500h10v13h-10z" fill="#f7faff" stroke="#4f74b3"/><path d="M3.200 13l1-3.500L11.500 2l2.500 2.500L6.700 12z" fill="#f6c84a" stroke="#a87d12" stroke-width=".8"/><path d="M11.500 2l1.300-1.300q.8-.6 1.600.1l.9.900q.6.800-.1 1.600L14 4.500z" fill="#e0353a" stroke="#9c1d21" stroke-width=".6"/><path d="M3.200 13l.5-1.800 1.300 1.300z" fill="#333"/></svg>
<span class="t" style="left:748px;top:148px">Editovat</span>
<svg class="ico" style="left:797px;top:145px" width="16" height="16" viewBox="0 0 16 16"><path d="M2.500 2.500l11 11M13.500 2.500l-11 11" stroke="#b3161c" stroke-width="3.600" stroke-linecap="round"/><path d="M2.500 2.500l11 11M13.500 2.500l-11 11" stroke="#dc2a30" stroke-width="2.200" stroke-linecap="round"/></svg>
<svg class="ico" style="left:820px;top:145px" width="16" height="16" viewBox="0 0 16 16"><rect x="0.500" y="9.500" width="15" height="6" fill="#f4f8fe" stroke="#4f74b3"/><path d="M2.500 11l2.500 3M5 11l-2.500 3M7.500 11v3" stroke="#2b3e63" stroke-width=".9"/><path d="M7 12.500l.8-3L12.500 2l2.200 1.500L10 11z" fill="#f6c84a" stroke="#a87d12" stroke-width=".8"/><path d="M12.500 2l.8-1.300q.6-.6 1.400-.1l.8.600q.6.600.2 1.300l-1 1z" fill="#e0353a" stroke="#9c1d21" stroke-width=".6"/></svg>
<svg class="ico" style="left:843px;top:145px" width="16" height="16" viewBox="0 0 16 16"><path d="M0.500 .5h6l3 3v8.500h-9z" fill="#f7faff" stroke="#6a87b8"/><path d="M6.500 .5v3h3" fill="#dbe7f7" stroke="#6a87b8" stroke-width=".8"/><rect x="7.500" y="8.500" width="8" height="7" fill="#fff" stroke="#4f74b3"/><path d="M9.200 12l1.800 1.800 3-3.800" fill="none" stroke="#1e9e28" stroke-width="1.600"/></svg>
<span class="t" style="left:863px;top:148px;letter-spacing:.25px">Vlastnosti</span>
<div class="vsep" style="left:921px;top:143px;height:20px"></div>
<svg class="ico" style="left:927px;top:145px" width="16" height="16" viewBox="0 0 16 16"><path d="M1.500 15.500q-1 0-1-1V5q0-1 1-1h4.500l1.500 1.800h5q1 0 1 1v7.700q0 1-1 1z" fill="#f7d64a" stroke="#c39a12"/><rect x="1.500" y="7.500" width="11" height="1.300" fill="#fdf1b0"/><path d="M12 0l.9 2 2-.8-.8 2 2 .9-2 .9.800 2-2-.8-.9 2-.9-2-2 .8.800-2-2-.9 2-.9-.8-2 2 .8z" fill="#f3f6fb" stroke="#7b90b5" stroke-width=".7"/><circle cx="12" cy="4.100" r="1.700" fill="#fff"/></svg>
<svg class="ico" style="left:950px;top:145px" width="16" height="16" viewBox="0 0 16 16"><path d="M0.500 .5h6.500l3.500 3.500v10.500h-10z" fill="#eef4fc" stroke="#7f9cc9"/><path d="M7 .5v3.500h3.500" fill="#cfe0f5" stroke="#7f9cc9" stroke-width=".8"/><rect x="6.500" y="7.500" width="9" height="8" fill="#dfe9f7" stroke="#22355a"/><path d="M8.500 9.500l4 4M13 10v4H9" fill="none" stroke="#22355a" stroke-width="1.700"/></svg>
<div class="grp" style="left:974px;top:141px;width:76px;height:24px"></div>
<div class="grip" style="left:977px;top:146px;height:13px"></div>
<svg class="ico" style="left:984px;top:146px" width="16" height="16" viewBox="0 0 16 16"><rect x="0.600" y="0.600" width="12.800" height="12.800" fill="#e4edfb" stroke="#3f5fa3" stroke-width="1.200"/><rect x="1.500" y="1.500" width="11" height="4.500" fill="#fff" opacity=".55"/><path d="M3.500 7h7M7 3.500v7" stroke="#24448c" stroke-width="2"/></svg>
<svg class="ico" style="left:1007px;top:146px" width="16" height="16" viewBox="0 0 16 16"><rect x="0.600" y="0.600" width="12.800" height="12.800" fill="#e4edfb" stroke="#3f5fa3" stroke-width="1.200"/><rect x="1.500" y="1.500" width="11" height="4.500" fill="#fff" opacity=".55"/><path d="M3.500 7h7" stroke="#24448c" stroke-width="2"/></svg>
<svg class="ico" style="left:1030px;top:146px" width="16" height="16" viewBox="0 0 16 16"><rect x="0.600" y="0.600" width="12.800" height="12.800" fill="#d6e4f8" stroke="#3f5fa3" stroke-width="1.200"/><rect x="1.500" y="1.500" width="11" height="4.500" fill="#fff" opacity=".55"/><path d="M3.500 3l3.500 8 3.500-8M5 6h4" fill="none" stroke="#1b3a86" stroke-width="1.600"/></svg>
<!-- LEFT panel -->
<div class="pathbar" style="left:67px;top:166px;width:541px;height:20px"><span>Z:\home\robert\Stažené</span></div>
<div class="sunk" style="left:67px;top:185px;width:541px;height:520px;border-color:#808080 #fff #fff #808080"></div>
<div class="abs" style="left:68px;top:186px;width:539px;height:518px;border:1px solid #404040;border-right-color:#d4d0c8;border-bottom-color:#d4d0c8;background:#fff"></div>
<div class="hdr" style="left:69px;top:187px;width:521px">
<div class="hc" style="left:0;width:272px;padding-left:7px">Název</div>
<div class="hc r" style="left:272px;width:69px;padding-right:6px">Velikost</div>
<div class="hc" style="left:341px;width:120px;padding-left:9px">Typ</div>
<div class="hc r" style="left:461px;width:60px;padding-right:2px">Změněno</div>
</div>
<div class="panel" id="lp" style="left:70px;top:204px;width:520px;height:484px">
<div class="r" style="top:0px"><svg class="fi" width="15" height="16" viewBox="0 0 15 16"><rect x="0.500" y="0.500" width="13" height="14" rx="1.500" fill="#fff" stroke="#7e7e7e"/><rect x="2" y="2" width="10" height="11" fill="#efefef"/><path d="M3 3.500h8M3 5.500h8M3 7.500h4M3 9.500h8M3 11.500h6" stroke="#c4c4c4" stroke-width="1"/></svg><span class="n" style="letter-spacing:-0.206px">pgt1020plus.pdf</span><span class="s">541 KB</span><span class="t2">.pdf-file</span><span class="d">29.5.2015</span></div>
<div class="r" style="top:17px"><svg class="fi" width="15" height="16" viewBox="0 0 15 16"><rect x="0.500" y="0.500" width="13" height="14" rx="1.500" fill="#fff" stroke="#7e7e7e"/><rect x="2" y="2" width="10" height="11" fill="#efefef"/><path d="M3 3.500h8M3 5.500h8M3 7.500h4M3 9.500h8M3 11.500h6" stroke="#c4c4c4" stroke-width="1"/></svg><span class="n" style="letter-spacing:-0.011px">traccar-linux-64-2.12.zip</span><span class="s">23 623 KB</span><span class="t2">Soubor ZIP</span><span class="d">29.5.2015</span></div>
<div class="r" style="top:34px"><svg class="fi" width="15" height="16" viewBox="0 0 15 16"><rect x="0.500" y="0.500" width="13" height="14" rx="1.500" fill="#fff" stroke="#7e7e7e"/><rect x="2" y="2" width="10" height="11" fill="#efefef"/><path d="M3 3.500h8M3 5.500h8M3 7.500h4M3 9.500h8M3 11.500h6" stroke="#c4c4c4" stroke-width="1"/></svg><span class="n" style="letter-spacing:0.034px">projekteva-letitrain.mp3</span><span class="s">3 677 KB</span><span class="t2">Soubor MP3</span><span class="d">29.5.2015</span></div>
<div class="r" style="top:51px"><svg class="fi" width="15" height="16" viewBox="0 0 15 16"><rect x="0.500" y="0.500" width="13" height="14" rx="1.500" fill="#fff" stroke="#7e7e7e"/><rect x="2" y="2" width="10" height="11" fill="#efefef"/><path d="M3 3.500h8M3 5.500h8M3 7.500h4M3 9.500h8M3 11.500h6" stroke="#c4c4c4" stroke-width="1"/></svg><span class="n" style="letter-spacing:0.187px">Adam_Selzer_-_Well.mp3</span><span class="s">2 601 KB</span><span class="t2">Soubor MP3</span><span class="d">28.5.2015</span></div>
<div class="r" style="top:68px"><svg class="fi" width="15" height="16" viewBox="0 0 15 16"><rect x="0.500" y="0.500" width="13" height="14" rx="1.500" fill="#fff" stroke="#7e7e7e"/><rect x="2" y="2" width="10" height="11" fill="#efefef"/><path d="M3 3.500h8M3 5.500h8M3 7.500h4M3 9.500h8M3 11.500h6" stroke="#c4c4c4" stroke-width="1"/></svg><span class="n" style="letter-spacing:-0.062px">videotube133.rar</span><span class="s">26 102 KB</span><span class="t2">.rar-file</span><span class="d">27.5.2015</span></div>
<div class="r" style="top:85px"><svg class="fi" width="15" height="16" viewBox="0 0 15 16"><rect x="0.500" y="0.500" width="13" height="14" rx="1.500" fill="#fff" stroke="#7e7e7e"/><rect x="2" y="2" width="10" height="11" fill="#efefef"/><path d="M3 3.500h8M3 5.500h8M3 7.500h4M3 9.500h8M3 11.500h6" stroke="#c4c4c4" stroke-width="1"/></svg><span class="n" style="letter-spacing:-0.063px">screenshot-www.transportbeton.cz 2015-05-27 ...</span><span class="s">200 KB</span><span class="t2">Obrázek PNG</span><span class="d">27.5.2015</span></div>
<div class="r" style="top:102px"><svg class="fi" width="15" height="16" viewBox="0 0 15 16"><rect x="0.500" y="0.500" width="13" height="14" rx="1.500" fill="#fff" stroke="#7e7e7e"/><rect x="2" y="2" width="10" height="11" fill="#efefef"/><path d="M3 3.500h8M3 5.500h8M3 7.500h4M3 9.500h8M3 11.500h6" stroke="#c4c4c4" stroke-width="1"/></svg><span class="n" style="letter-spacing:-0.063px">screenshot-www.transportbeton.cz 2015-05-27 ...</span><span class="s">18 KB</span><span class="t2">Obrázek PNG</span><span class="d">27.5.2015</span></div>
<div class="r" style="top:119px"><svg class="fi" width="15" height="16" viewBox="0 0 15 16"><rect x="0.500" y="0.500" width="13" height="14" rx="1.500" fill="#fff" stroke="#7e7e7e"/><rect x="2" y="2" width="10" height="11" fill="#efefef"/><path d="M3 3.500h8M3 5.500h8M3 7.500h4M3 9.500h8M3 11.500h6" stroke="#c4c4c4" stroke-width="1"/></svg><span class="n" style="letter-spacing:-0.063px">screenshot-www.transportbeton.cz 2015-05-27 ...</span><span class="s">35 KB</span><span class="t2">Obrázek PNG</span><span class="d">27.5.2015</span></div>
<div class="r" style="top:136px"><svg class="fi" width="15" height="16" viewBox="0 0 15 16"><rect x="0.500" y="0.500" width="13" height="14" rx="1.500" fill="#fff" stroke="#7e7e7e"/><rect x="2" y="2" width="10" height="11" fill="#efefef"/><path d="M3 3.500h8M3 5.500h8M3 7.500h4M3 9.500h8M3 11.500h6" stroke="#c4c4c4" stroke-width="1"/></svg><span class="n" style="letter-spacing:-0.111px">kvl_product.wmv</span><span class="s">3 074 KB</span><span class="t2">.wmv-file</span><span class="d">26.5.2015</span></div>
<div class="r" style="top:153px"><svg class="fi" width="15" height="16" viewBox="0 0 15 16"><rect x="0.500" y="0.500" width="13" height="14" rx="1.500" fill="#fff" stroke="#7e7e7e"/><rect x="2" y="2" width="10" height="11" fill="#efefef"/><path d="M3 3.500h8M3 5.500h8M3 7.500h4M3 9.500h8M3 11.500h6" stroke="#c4c4c4" stroke-width="1"/></svg><span class="n" style="letter-spacing:-0.179px">3030165-turek2.pdf</span><span class="s">44 KB</span><span class="t2">.pdf-file</span><span class="d">26.5.2015</span></div>
<div class="r" style="top:170px"><svg class="fi" width="15" height="16" viewBox="0 0 15 16"><rect x="0.500" y="0.500" width="13" height="14" rx="1.500" fill="#fff" stroke="#7e7e7e"/><rect x="2" y="2" width="10" height="11" fill="#efefef"/><path d="M3 3.500h8M3 5.500h8M3 7.500h4M3 9.500h8M3 11.500h6" stroke="#c4c4c4" stroke-width="1"/></svg><span class="n" style="letter-spacing:-0.179px">3030164-turek2.pdf</span><span class="s">44 KB</span><span class="t2">.pdf-file</span><span class="d">26.5.2015</span></div>
<div class="r" style="top:187px"><svg class="fi" width="15" height="16" viewBox="0 0 15 16"><rect x="0.500" y="0.500" width="13" height="14" rx="1.500" fill="#fff" stroke="#7e7e7e"/><rect x="2" y="2" width="10" height="11" fill="#efefef"/><path d="M3 3.500h8M3 5.500h8M3 7.500h4M3 9.500h8M3 11.500h6" stroke="#c4c4c4" stroke-width="1"/></svg><span class="n" style="letter-spacing:-0.134px">Carpress_v1.8.0.rar</span><span class="s">6 696 KB</span><span class="t2">.rar-file</span><span class="d">25.5.2015</span></div>
<div class="r" style="top:204px"><svg class="fi" width="15" height="16" viewBox="0 0 15 16"><rect x="0.500" y="0.500" width="13" height="14" rx="1.500" fill="#fff" stroke="#7e7e7e"/><rect x="2" y="2" width="10" height="11" fill="#efefef"/><path d="M3 3.500h8M3 5.500h8M3 7.500h4M3 9.500h8M3 11.500h6" stroke="#c4c4c4" stroke-width="1"/></svg><span class="n" style="letter-spacing:-0.142px">Canon-MF4320-4350.ppd</span><span class="s">17 KB</span><span class="t2">.ppd-file</span><span class="d">25.5.2015</span></div>
<div class="r" style="top:221px"><svg class="fi" width="15" height="16" viewBox="0 0 15 16"><rect x="0.500" y="0.500" width="13" height="14" rx="1.500" fill="#fff" stroke="#7e7e7e"/><rect x="2" y="2" width="10" height="11" fill="#efefef"/><path d="M3 3.500h8M3 5.500h8M3 7.500h4M3 9.500h8M3 11.500h6" stroke="#c4c4c4" stroke-width="1"/></svg><span class="n" style="letter-spacing:0.073px">autocarrepair10.rar</span><span class="s">6 009 KB</span><span class="t2">.rar-file</span><span class="d">25.5.2015</span></div>
<div class="r" style="top:238px"><svg class="fi" width="15" height="16" viewBox="0 0 15 16"><rect x="0.500" y="0.500" width="13" height="14" rx="1.500" fill="#fff" stroke="#7e7e7e"/><rect x="2" y="2" width="10" height="11" fill="#efefef"/><path d="M3 3.500h8M3 5.500h8M3 7.500h4M3 9.500h8M3 11.500h6" stroke="#c4c4c4" stroke-width="1"/></svg><span class="n" style="letter-spacing:-0.053px">flippy_buzzworthy_1.1.0.zip</span><span class="s">4 227 KB</span><span class="t2">Soubor ZIP</span><span class="d">25.5.2015</span></div>
<div class="r" style="top:255px"><svg class="fi" width="15" height="16" viewBox="0 0 15 16"><rect x="0.500" y="0.500" width="13" height="14" rx="1.500" fill="#fff" stroke="#7e7e7e"/><rect x="2" y="2" width="10" height="11" fill="#efefef"/><path d="M3 3.500h8M3 5.500h8M3 7.500h4M3 9.500h8M3 11.500h6" stroke="#c4c4c4" stroke-width="1"/></svg><span class="n" style="letter-spacing:0.074px">automatic-video-posts.zip</span><span class="s">85 KB</span><span class="t2">Soubor ZIP</span><span class="d">25.5.2015</span></div>
<div class="r" style="top:272px"><svg class="fi" width="15" height="16" viewBox="0 0 15 16"><rect x="0.500" y="0.500" width="13" height="14" rx="1.500" fill="#fff" stroke="#7e7e7e"/><rect x="2" y="2" width="10" height="11" fill="#efefef"/><path d="M3 3.500h8M3 5.500h8M3 7.500h4M3 9.500h8M3 11.500h6" stroke="#c4c4c4" stroke-width="1"/></svg><span class="n" style="letter-spacing:0.052px">133682_logo_car_protect.jpg</span><span class="s">117 KB</span><span class="t2">JPEG Image</span><span class="d">22.5.2015</span></div>
<div class="r" style="top:289px"><svg class="fi" width="15" height="16" viewBox="0 0 15 16"><rect x="0.500" y="0.500" width="13" height="14" rx="1.500" fill="#fff" stroke="#7e7e7e"/><rect x="2" y="2" width="10" height="11" fill="#efefef"/><path d="M3 3.500h8M3 5.500h8M3 7.500h4M3 9.500h8M3 11.500h6" stroke="#c4c4c4" stroke-width="1"/></svg><span class="n" style="letter-spacing:0.015px">winscp573.zip</span><span class="s">4 806 KB</span><span class="t2">Soubor ZIP</span><span class="d">22.5.2015</span></div>
<div class="r" style="top:306px"><svg class="fi" width="15" height="16" viewBox="0 0 15 16"><rect x="0.500" y="0.500" width="13" height="14" rx="1.500" fill="#fff" stroke="#7e7e7e"/><rect x="2" y="2" width="10" height="11" fill="#efefef"/><path d="M3 3.500h8M3 5.500h8M3 7.500h4M3 9.500h8M3 11.500h6" stroke="#c4c4c4" stroke-width="1"/></svg><span class="n" style="letter-spacing:0.062px">wordpress-4.2.2-cs_CZ.tar.gz</span><span class="s">6 546 KB</span><span class="t2">Soubor GZ</span><span class="d">22.5.2015</span></div>
<div class="r" style="top:323px"><svg class="fi" width="15" height="16" viewBox="0 0 15 16"><rect x="0.500" y="0.500" width="13" height="14" rx="1.500" fill="#fff" stroke="#7e7e7e"/><rect x="2" y="2" width="10" height="11" fill="#efefef"/><path d="M3 3.500h8M3 5.500h8M3 7.500h4M3 9.500h8M3 11.500h6" stroke="#c4c4c4" stroke-width="1"/></svg><span class="n" style="letter-spacing:0.252px">Real-estate-icon-3.jpg</span><span class="s">92 KB</span><span class="t2">JPEG Image</span><span class="d">19.5.2015</span></div>
<div class="r" style="top:340px"><svg class="fi" width="15" height="16" viewBox="0 0 15 16"><rect x="0.500" y="0.500" width="13" height="14" rx="1.500" fill="#fff" stroke="#7e7e7e"/><rect x="2" y="2" width="10" height="11" fill="#efefef"/><path d="M3 3.500h8M3 5.500h8M3 7.500h4M3 9.500h8M3 11.500h6" stroke="#c4c4c4" stroke-width="1"/></svg><span class="n" style="letter-spacing:0.202px">kvreal-komercni-specifikace.pdf</span><span class="s">675 KB</span><span class="t2">.pdf-file</span><span class="d">18.5.2015</span></div>
<div class="r" style="top:357px"><svg class="fi" width="15" height="16" viewBox="0 0 15 16"><rect x="0.500" y="0.500" width="13" height="14" rx="1.500" fill="#fff" stroke="#7e7e7e"/><rect x="2" y="2" width="10" height="11" fill="#efefef"/><path d="M3 3.500h8M3 5.500h8M3 7.500h4M3 9.500h8M3 11.500h6" stroke="#c4c4c4" stroke-width="1"/></svg><span class="n" style="letter-spacing:0.187px">livigno czech hudy.xls</span><span class="s">9 KB</span><span class="t2">.xls-file</span><span class="d">18.5.2015</span></div>
<div class="r" style="top:374px"><svg class="fi" width="15" height="16" viewBox="0 0 15 16"><rect x="0.500" y="0.500" width="13" height="14" rx="1.500" fill="#fff" stroke="#7e7e7e"/><rect x="2" y="2" width="10" height="11" fill="#efefef"/><path d="M3 3.500h8M3 5.500h8M3 7.500h4M3 9.500h8M3 11.500h6" stroke="#c4c4c4" stroke-width="1"/></svg><span class="n" style="letter-spacing:0.025px">livigno.xls</span><span class="s">8 KB</span><span class="t2">.xls-file</span><span class="d">11.5.2015</span></div>
<div class="r" style="top:391px"><svg class="fi" width="15" height="16" viewBox="0 0 15 16"><rect x="0.500" y="0.500" width="13" height="14" rx="1.500" fill="#fff" stroke="#7e7e7e"/><rect x="2" y="2" width="10" height="11" fill="#efefef"/><path d="M3 3.500h8M3 5.500h8M3 7.500h4M3 9.500h8M3 11.500h6" stroke="#c4c4c4" stroke-width="1"/></svg><span class="n" style="letter-spacing:-0.099px">GPS, mobilní příslušenství.pdf</span><span class="s">45 KB</span><span class="t2">.pdf-file</span><span class="d">11.5.2015</span></div>
<div class="r" style="top:408px"><svg class="fi" width="15" height="16" viewBox="0 0 15 16"><rect x="0.500" y="0.500" width="13" height="14" rx="1.500" fill="#fff" stroke="#7e7e7e"/><rect x="2" y="2" width="10" height="11" fill="#efefef"/><path d="M3 3.500h8M3 5.500h8M3 7.500h4M3 9.500h8M3 11.500h6" stroke="#c4c4c4" stroke-width="1"/></svg><span class="n" style="letter-spacing:-0.075px">GPS, mobilní příslušenství.docx</span><span class="s">5 KB</span><span class="t2">.docx-file</span><span class="d">11.5.2015</span></div>
<div class="r" style="top:425px"><svg class="fi" width="15" height="16" viewBox="0 0 15 16"><rect x="0.500" y="0.500" width="13" height="14" rx="1.500" fill="#fff" stroke="#7e7e7e"/><rect x="2" y="2" width="10" height="11" fill="#efefef"/><path d="M3 3.500h8M3 5.500h8M3 7.500h4M3 9.500h8M3 11.500h6" stroke="#c4c4c4" stroke-width="1"/></svg><span class="n" style="letter-spacing:0.177px">KOPÍROVÁNÍ , KROUŽKOVÁ VAZBA, LAMINOVÁ...</span><span class="s">24 KB</span><span class="t2">.xls-file</span><span class="d">11.5.2015</span></div>
<div class="r" style="top:442px"><svg class="fi" width="15" height="16" viewBox="0 0 15 16"><rect x="0.500" y="0.500" width="13" height="14" rx="1.500" fill="#fff" stroke="#7e7e7e"/><rect x="2" y="2" width="10" height="11" fill="#efefef"/><path d="M3 3.500h8M3 5.500h8M3 7.500h4M3 9.500h8M3 11.500h6" stroke="#c4c4c4" stroke-width="1"/></svg><span class="n" style="letter-spacing:0.156px">kopírování-ceník.odt</span><span class="s">40 KB</span><span class="t2">.odt-file</span><span class="d">11.5.2015</span></div>
<div class="r" style="top:459px"><svg class="fi" width="15" height="16" viewBox="0 0 15 16"><rect x="0.500" y="0.500" width="13" height="14" rx="1.500" fill="#fff" stroke="#7e7e7e"/><rect x="2" y="2" width="10" height="11" fill="#efefef"/><path d="M3 3.500h8M3 5.500h8M3 7.500h4M3 9.500h8M3 11.500h6" stroke="#c4c4c4" stroke-width="1"/></svg><span class="n" style="letter-spacing:0.174px">Virtuální sídlo.docx</span><span class="s">5 KB</span><span class="t2">.docx-file</span><span class="d">11.5.2015</span></div>
<div class="r" style="top:476px"><svg class="fi" width="15" height="16" viewBox="0 0 15 16"><rect x="0.500" y="0.500" width="13" height="14" rx="1.500" fill="#fff" stroke="#7e7e7e"/><rect x="2" y="2" width="10" height="11" fill="#efefef"/><path d="M3 3.500h8M3 5.500h8M3 7.500h4M3 9.500h8M3 11.500h6" stroke="#c4c4c4" stroke-width="1"/></svg><span class="n" style="letter-spacing:-0.026px">CAA-F-SLS-027-3-2013 Formular evaluation Phla U...</span><span class="s">333 KB</span><span class="t2">.docx-file</span><span class="d">7.5.2015 1</span></div>
</div>
<!-- left vscroll -->
<div class="sb" style="left:590px;top:187px;width:16px;height:501px"></div>
<div class="btn3" style="left:590px;top:187px;width:16px;height:16px"><div class="arr" style="left:3px;top:0px;border-bottom-color:#000"></div></div>
<div class="btn3" style="left:590px;top:672px;width:16px;height:16px"><div class="arr" style="left:3px;top:5px;border-top-color:#000"></div></div>
<!-- left hscroll -->
<div class="sb" style="left:69px;top:688px;width:522px;height:16px"></div>
<div class="btn3" style="left:70px;top:688px;width:16px;height:16px"><div class="arr" style="left:0px;top:3px;border-right-color:#000"></div></div>
<div class="btn3" style="left:86px;top:688px;width:416px;height:16px"></div>
<div class="btn3" style="left:575px;top:688px;width:16px;height:16px"><div class="arr" style="left:5px;top:3px;border-left-color:#000"></div></div>
<div class="abs" style="left:591px;top:688px;width:15px;height:16px;background:#d4d0c8"></div>
<!-- RIGHT panel -->
<div class="pathbar" style="left:614px;top:166px;width:540px;height:20px"><span>/var/mail</span></div>
<div class="sunk" style="left:613px;top:185px;width:541px;height:520px;border-color:#808080 #fff #fff #808080"></div>
<div class="abs" style="left:614px;top:186px;width:539px;height:518px;border:1px solid #404040;border-right-color:#d4d0c8;border-bottom-color:#d4d0c8;background:#fff"></div>
<div class="hdr" style="left:615px;top:187px;width:537px">
<div class="hc" style="left:0;width:150px;padding-left:7px">Název</div>
<div class="hc r" style="left:150px;width:70px;padding-right:7px">Velikost</div>
<div class="hc" style="left:220px;width:150px;padding-left:7px">Změněno</div>
<div class="hc" style="left:370px;width:79px;padding-left:6px">Práva</div>
<div class="hc" style="left:449px;width:62px;padding-left:7px">Vlastník</div>
<div class="hc" style="left:511px;width:26px"></div>
</div>
<div class="panel" id="rp" style="left:615px;top:204px;width:537px;height:499px">
<div class="r" style="top:0"><svg class="ico" style="left:2.500px;top:1px" width="16" height="16" viewBox="0 0 16 16"><path d="M0.500 13V2q0-1 1-1h5l2 2h4v3" fill="#b5b9bf" stroke="#7b8088"/><path d="M1.500 14.500q-1 0-1-1V5.500q0-1 1-1h12.500q1 0 1 1v8q0 1-1 1z" fill="#6c9fe0" stroke="#2f5a9e"/><path d="M1.500 5.500h12.500v3h-12.500z" fill="#a3c6f1"/><path d="M5.500 6.500L3 9.500h1.800v3h6.700v-1.400H6.200V9.500H8z" fill="#16181d"/></svg><span class="n" style="left:20px">..</span><span class="dt" style="left:226px">20.2.2015 15:42:57</span><span style="left:375px;letter-spacing:-.2px">rwxr-xr-x</span><span style="left:454px">root</span></div>
<div class="r" style="top:17px"><svg class="fi" width="15" height="16" viewBox="0 0 15 16"><rect x="0.500" y="0.500" width="13" height="14" rx="1.500" fill="#fff" stroke="#7e7e7e"/><rect x="2" y="2" width="10" height="11" fill="#efefef"/><path d="M3 3.500h8M3 5.500h8M3 7.500h4M3 9.500h8M3 11.500h6" stroke="#c4c4c4" stroke-width="1"/></svg><span class="n">mail</span><span class="s" style="left:149px;width:66px">209 KB</span><span class="dt" style="left:226px">10.2.2015 6:09:03</span><span style="left:375px;letter-spacing:.15px">rw-------</span><span style="left:454px">mail</span></div>
<div class="r" style="top:34px"><svg class="fi" width="15" height="16" viewBox="0 0 15 16"><rect x="0.500" y="0.500" width="13" height="14" rx="1.500" fill="#fff" stroke="#7e7e7e"/><rect x="2" y="2" width="10" height="11" fill="#efefef"/><path d="M3 3.500h8M3 5.500h8M3 7.500h4M3 9.500h8M3 11.500h6" stroke="#c4c4c4" stroke-width="1"/></svg><div class="abs" style="left:18px;top:0;width:32px;height:17px;background:#d4d0c8"></div><span class="n">root</span><span class="s" style="left:149px;width:66px">5 481 KB</span><span class="dt" style="left:226px">8.6.2015 4:39:03</span><span style="left:375px;letter-spacing:.15px">rw-------</span><span style="left:454px">root</span></div>
</div>
<!-- status line -->
<span class="t" style="left:68px;top:712px;letter-spacing:-.2px">0 B z 3 528 MB v 0 z 168</span>
<span class="t" style="left:528px;top:712px">1 skryté</span>
<span class="t" style="left:614px;top:712px;letter-spacing:-.2px">5 481 KB z 5 690 KB v 1 z 2</span>
<!-- bottom status bar -->
<div class="sc" style="left:67px;top:728px;width:865px;height:20px"></div>
<div class="sc" style="left:934px;top:728px;width:33px;height:20px"></div>
<svg class="ico" style="left:941.5px;top:730px" width="16" height="16" viewBox="0 0 16 16"><path d="M4 8.500V5.500a3.500 3.500 0 0 1 7 0v3" fill="none" stroke="#a87a0c" stroke-width="2.600"/><path d="M4 8.500V5.500a3.500 3.500 0 0 1 7 0v3" fill="none" stroke="#e9bb38" stroke-width="1.200"/><rect x="1.500" y="7.500" width="12" height="8" rx="1" fill="#f0b92a" stroke="#a87a0c"/><path d="M2.500 9.500h10M2.500 11.500h10M2.500 13.500h10" stroke="#fbdc78" stroke-width="1"/><path d="M7.500 10v3" stroke="#4a3303" stroke-width="1.400"/></svg>
<div class="sc" style="left:969px;top:728px;width:68px;height:20px"></div>
<span class="t" style="left:985px;top:734px">SFTP-3</span>
<div class="sc" style="left:1039px;top:728px;width:33px;height:20px"></div>
<svg class="ico" style="left:1046px;top:731px" width="16" height="16" viewBox="0 0 16 16"><rect x="0.500" y="0.500" width="11" height="8" fill="#c9c6bf" stroke="#9f9c95"/><rect x="2" y="2" width="8" height="5" fill="#dad7d0"/><rect x="4" y="9" width="4" height="1.500" fill="#a9a69f"/><rect x="2" y="10.500" width="8" height="1" fill="#a9a69f"/><rect x="9.500" y="2.500" width="5" height="10" fill="#c9c6bf" stroke="#9f9c95"/><path d="M11 5h2M11 7h2" stroke="#a9a69f"/><path d="M7.500 12v3.500h6M12 12.500v3" stroke="#9f9c95" fill="none"/></svg>
<div class="sc" style="left:1074px;top:728px;width:80px;height:20px"></div>
<span class="t" style="left:1095.500px;top:734px;letter-spacing:-.4px">0:10:31</span>
<svg class="abs" style="left:1141px;top:735px" width="13" height="13" viewBox="0 0 13 13"><path d="M12 1L1 12M12 5L5 12M12 9L9 12" stroke="#808080" stroke-width="1.3"/><path d="M12 2.500L2.500 12M12 6.500L6.500 12M12 10.500L10.500 12" stroke="#fff" stroke-width="1"/></svg>
</div>

<div id="dlg"><div class="title"></div><div class="body"></div></div>
<div id="d">
<svg class="abs" style="left:415px;top:298px" width="17" height="17" viewBox="0 0 17 17"><circle cx="8.400" cy="8.400" r="6.800" fill="#ece8e2" stroke="#d8d3cb"/><path d="M6 6l4.800 4.800M10.800 6L6 10.800" stroke="#8f8b84" stroke-width="1.300"/></svg>
<span class="wt" style="left:441px;top:300px">Chyba</span>
<svg class="abs" style="left:420px;top:332px" width="32" height="34" viewBox="0 0 32 34">
<defs><radialGradient id="rg" cx="50%" cy="30%" r="70%"><stop offset="0" stop-color="#f4585c"/><stop offset="0.600" stop-color="#d81e26"/><stop offset="1" stop-color="#a20c12"/></radialGradient></defs>
<ellipse cx="15.500" cy="30.500" rx="11" ry="2" fill="#000" opacity=".18"/>
<circle cx="15.500" cy="15.800" r="13.900" fill="url(#rg)" stroke="#9a0c12" stroke-width="1"/>
<path d="M2.500 14a13 13 0 0 1 26 0c-6-3.500-20-3.500-26 0z" fill="#fff" opacity=".25"/>
<path d="M9.500 9.800l12 12M21.500 9.800l-12 12" stroke="#fff" stroke-width="4.600" stroke-linecap="butt"/>
</svg>
<span class="t" style="left:464px;top:334px;letter-spacing:-.08px">External exception 80000101</span>
<span class="t" style="left:464px;top:359px;line-height:13px">Prosíme, pomozte nám vylešit WinSCP nahlášením této chyby na<br>Fóru pro podporu uživatelů WinSCP.</span>
<div class="abs" style="left:464px;top:397px;width:336px;height:73px;background:#fff;border:1px solid #808080;border-right-color:#fff;border-bottom-color:#fff;box-shadow:inset 1px 1px 0 #404040,inset -1px -1px 0 #d4d0c8"></div>
<span class="t" style="left:469px;top:401px;line-height:13px">Stack trace:<br><span style="letter-spacing:-.15px">(F77D2D80)WinSCP.exe<br>(000689FA)ntdll.dll<br>(00068E5E)ntdll.dll<br>(0006B2C9)ntdll.dll</span></span>
<div class="sb" style="left:782px;top:399px;width:16px;height:69px"></div>
<div class="btn3" style="left:782px;top:399px;width:16px;height:16px"><div class="arr" style="left:3px;top:0px;border-bottom-color:#000"></div></div>
<div class="btn3" style="left:782px;top:415px;width:16px;height:26px"></div>
<div class="btn3" style="left:782px;top:452px;width:16px;height:16px"><div class="arr" style="left:3px;top:5px;border-top-color:#000"></div></div>
<div class="pb" style="left:565px;top:490px;width:75px;height:24px">OK</div>
<div class="pb" style="left:645px;top:490px;width:75px;height:24px">Nápově<u>d</u>a</div>
<div class="abs" style="left:725px;top:490px;width:75px;height:25px;background:#000"></div>
<div class="pb" style="left:726px;top:491px;width:73px;height:23px;padding-top:6px"><u>N</u>ahlásit</div>
</div>

</body></html>
